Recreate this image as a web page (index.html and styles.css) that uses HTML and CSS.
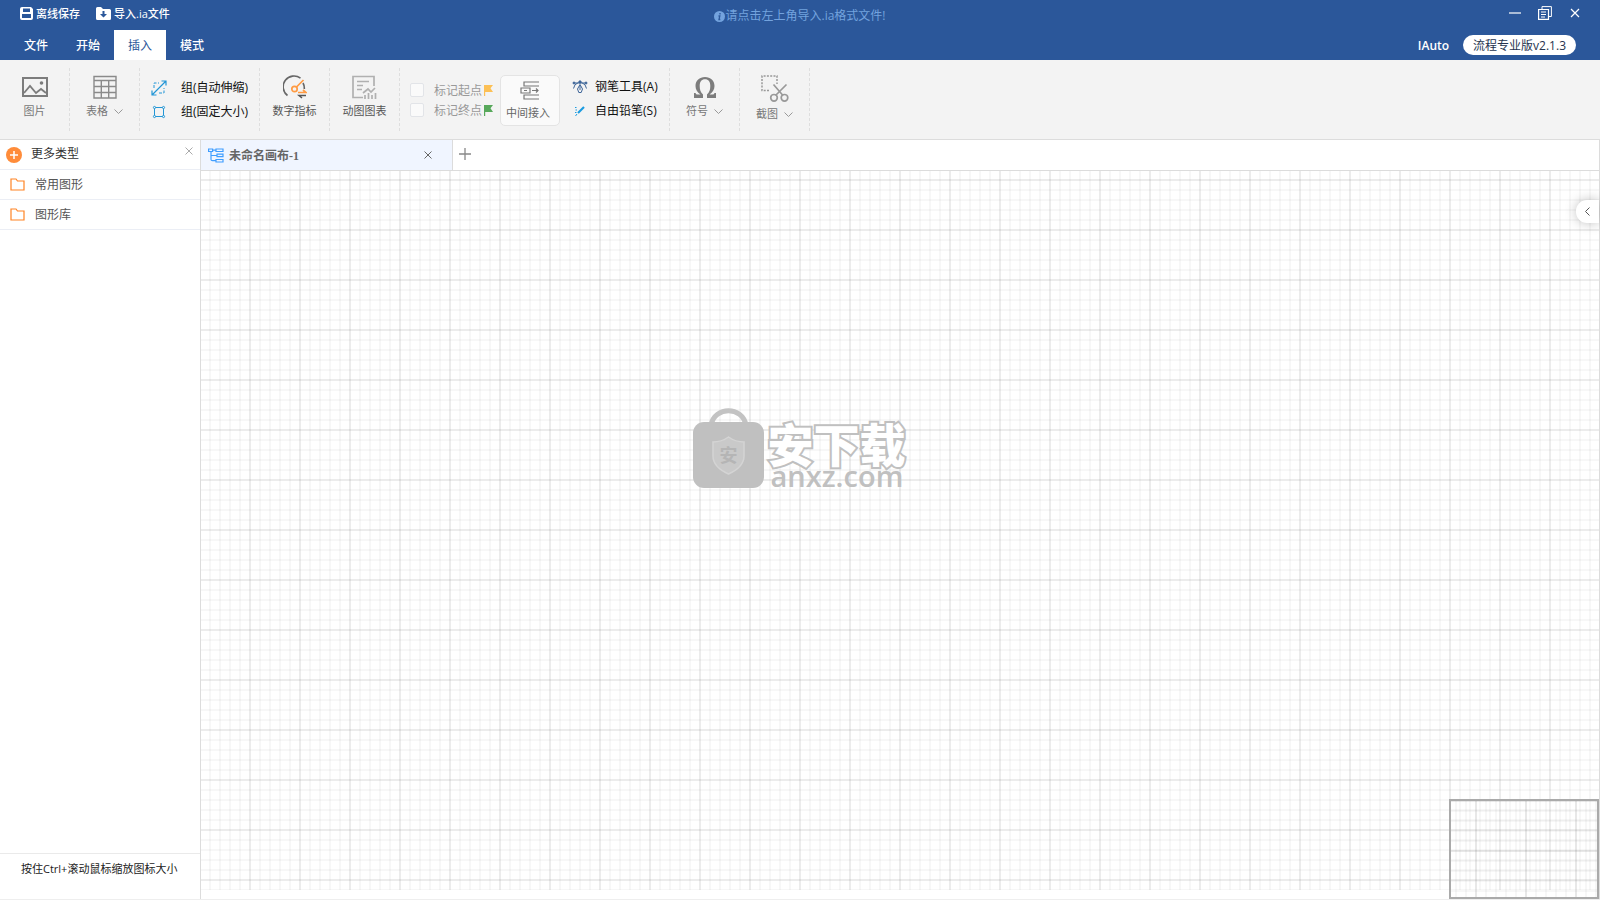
FILE: index.html
```html
<!DOCTYPE html>
<html lang="zh-CN">
<head>
<meta charset="utf-8">
<title>IAuto</title>
<link rel="stylesheet" href="styles.css">
</head>
<body>
<header class="header">
  <div class="titlebar">
    <div class="quick">
      <button class="quick-btn" type="button">
        <svg width="13" height="13" viewBox="0 0 13 13"><path fill="#fff" fill-rule="evenodd" d="M2 0h9l2 2v9a2 2 0 0 1-2 2H2a2 2 0 0 1-2-2V2a2 2 0 0 1 2-2zM3 1.500v3.500h7V1.500zM2 7v4h9V7z"/></svg>
        离线保存
      </button>
      <button class="quick-btn" type="button">
        <svg width="15" height="13" viewBox="0 0 15 13"><path fill="#fff" d="M0 1.500Q0 0 1.500 0H5l2 2h6.500Q15 2 15 3.500v8q0 1.500-1.500 1.500h-12Q0 13 0 11.500z"/><path fill="#2b579a" d="M6.500 4h2v3h2.500L7.500 10.500 4 7h2.500z"/></svg>
        导入.ia文件
      </button>
    </div>
    <div class="hint">
      <svg width="11" height="11" viewBox="0 0 11 11"><circle cx="5.500" cy="5.500" r="5.500" fill="#73a3de"/><path d="M6 2v1.500M4.500 5h1.300L5 8.500h1.300" fill="none" stroke="#2b579a" stroke-width="1.300"/></svg>请点击左上角导入.ia格式文件!
    </div>
    <div class="window-btns">
      <button type="button" aria-label="最小化"><svg width="14" height="14" viewBox="0 0 14 14"><path d="M1 7h12" stroke="#fff" stroke-width="1.200"/></svg></button>
      <button type="button" aria-label="还原"><svg width="14" height="14" viewBox="0 0 14 14" fill="none" stroke="#fff"><path d="M4 3.500V.6h9.400v9.900H10.500"/><path d="M.6 3.500h9.900v9.900H.6zM3 6h5M3 8.500h5M3 11h4" stroke-width="1.200"/></svg></button>
      <button type="button" aria-label="关闭"><svg width="14" height="14" viewBox="0 0 14 14"><path d="M3 3l8 8M11 3l-8 8" stroke="#fff" stroke-width="1.200"/></svg></button>
    </div>
  </div>
  <div class="menubar">
    <nav class="menu">
      <button type="button">文件</button>
      <button type="button">开始</button>
      <button type="button" class="active">插入</button>
      <button type="button">模式</button>
    </nav>
    <div class="account">
      <span class="user">IAuto</span>
      <button class="version" type="button">流程专业版v2.1.3</button>
    </div>
  </div>
</header>

<div class="ribbon">
  <div class="group">
    <button class="tool" type="button">
      <svg width="26" height="24" viewBox="0 0 26 24" fill="none" stroke="#7c7c7c"><path d="M1 3h24v18H1z" stroke-width="2"/><path d="M2 18l6-7 6 7 5-4 5 4" stroke-width="1.800"/><circle cx="19.500" cy="8" r="1.800" fill="#7c7c7c" stroke="none"/></svg>
      <span>图片</span>
    </button>
  </div>
  <div class="group">
    <button class="tool" type="button">
      <svg width="24" height="24" viewBox="0 0 24 24" fill="none" stroke="#8a8a8a" stroke-width="1.400"><path d="M1 1.500h22v21.500H1zM1 5.500h22M1 11.500h22M1 17.500h22M8.300 5.500V23M15.700 5.500V23"/></svg>
      <span>表格 <svg class="caret" width="9" height="5" viewBox="0 0 9 5"><path d="M.5 .5l4 4 4-4" fill="none" stroke="#999"/></svg></span>
    </button>
  </div>
  <div class="group wide">
    <button class="row-tool" type="button">
      <svg width="16" height="16" viewBox="0 0 16 16" fill="none" stroke="#2296d6"><path d="M1 15L15 1M10.500 1H15v4.500M1 10.500V15h4.500" stroke-width="1.200"/><path d="M3 8V3h5M8 13h5V8" stroke-dasharray="3 1.500"/></svg>
      组(自动伸缩)
    </button>
    <button class="row-tool" type="button">
      <svg width="16" height="16" viewBox="0 0 16 16" fill="none" stroke="#2296d6"><path d="M4.500 3.500h7M4.500 12.500h7M3.500 4.500v7M12.500 4.500v7"/><g><circle cx="3.500" cy="3.500" r="1.100"/><circle cx="12.500" cy="3.500" r="1.100"/><circle cx="3.500" cy="12.500" r="1.100"/><circle cx="12.500" cy="12.500" r="1.100"/></g></svg>
      组(固定大小)
    </button>
  </div>
  <div class="group">
    <button class="tool dark" type="button">
      <svg width="24" height="24" viewBox="0 0 24 24" fill="none"><path d="M4.500 20.500A10.500 10.500 0 0 1 17.500 3.200M20 8a10.500 10.500 0 0 1 1.300 6" stroke="#666" stroke-width="1.600"/><g stroke="#ff9b43" stroke-width="1.700"><circle cx="11.500" cy="14" r="2.700"/><path d="M13.500 12L20.500 5M15 17.500h8l-3-2.500"/></g><path d="M23 20.500h-7l3 2.500" stroke="#555" stroke-width="1.500"/></svg>
      <span>数字指标</span>
    </button>
  </div>
  <div class="group">
    <button class="tool dark" type="button">
      <svg width="25" height="24" viewBox="0 0 25 24" fill="none" stroke="#b0b0b0" stroke-width="1.700"><path d="M22 11V1.500H1V22.500h10"/><path d="M5 6.500h12M5 10.500h6M5 14.500h5"/><path d="M11 18l5-4 3 3 4-4"/><path d="M13 24v-4M16.500 24v-6M20 24v-4M23.500 24v-6"/></svg>
      <span>动图图表</span>
    </button>
  </div>
  <div class="group flow">
    <div class="marks">
      <label><input type="checkbox" disabled><span>标记起点</span><svg width="9" height="11" viewBox="0 0 9 11"><path d="M0 0h9L6.500 3.200 9 7H1.200v4H0z" fill="#fcc055"/></svg></label>
      <label><input type="checkbox" disabled><span>标记终点</span><svg width="9" height="11" viewBox="0 0 9 11"><path d="M0 0h9L6.500 3.200 9 7H1.200v4H0z" fill="#57a85b"/></svg></label>
    </div>
    <button class="insert" type="button">
      <svg width="20" height="19" viewBox="0 0 20 19" fill="none" stroke="#777" stroke-width="1.200"><path d="M19 1H4v4h15M19 18H4v-4h15M1 7h9v5H1zM4 9.500h3M12 9.500h6M16 7.500l2 2-2 2"/></svg>
      <span>中间接入</span>
    </button>
    <div class="pens">
      <button class="row-tool" type="button">
        <svg width="16" height="16" viewBox="0 0 16 16" fill="none" stroke="#3d6498"><path d="M3 4h10M1.500 9.500Q2 5 6.500 3.500M14.500 9.500Q14 5 9.500 3.500M8 7v4M8 5.500L5.500 10l1.300 3.500h2.400L10.500 10z"/><g fill="#3d6498"><path d="M7 2h2v2H7z"/><circle cx="2" cy="4" r="1"/><circle cx="14" cy="4" r="1"/></g></svg>
        钢笔工具(A)
      </button>
      <button class="row-tool" type="button">
        <svg width="16" height="16" viewBox="0 0 16 16" fill="none" stroke="#1b9be0"><path d="M6 10l6-6" stroke-width="2.200"/><path d="M3.500 13l1.500-2M3 4.500h1.500M3.500 7H5M3 9.500h1.500"/></svg>
        自由铅笔(S)
      </button>
    </div>
  </div>
  <div class="group">
    <button class="tool" type="button">
      <svg width="24" height="24" viewBox="0 0 24 24"><path fill="#7c7c7c" d="M1 23v-5h1.500q.3 1.500 2 1.500h3C4.300 17.500 2.500 14.500 2.500 11 2.500 5.500 6.500 2 12 2s9.500 3.500 9.500 9c0 3.500-1.800 6.500-5 8.500h3q1.700 0 2-1.500H23v5h-9v-3.500c2.500-2 3.300-5 3.300-8.500 0-4.500-1.800-6.800-5.300-6.800S6.700 6.500 6.700 11c0 3.500.8 6.500 3.300 8.500V23z"/></svg>
      <span>符号 <svg class="caret" width="9" height="5" viewBox="0 0 9 5"><path d="M.5 .5l4 4 4-4" fill="none" stroke="#999"/></svg></span>
    </button>
  </div>
  <div class="group">
    <button class="tool" type="button">
      <svg width="28" height="27" viewBox="0 0 28 27" fill="none" stroke="#999"><path d="M8 15.500H1V1h15v8" stroke-width="1.500" stroke-dasharray="2 1.300"/><g stroke-width="1.700"><path d="M12.500 9.500l9.500 11M25.500 9.500L14.500 20.500"/><circle cx="13" cy="22.800" r="3.300"/><circle cx="23.500" cy="22.800" r="3.300"/></g></svg>
      <span>截图 <svg class="caret" width="9" height="5" viewBox="0 0 9 5"><path d="M.5 .5l4 4 4-4" fill="none" stroke="#999"/></svg></span>
    </button>
  </div>
</div>

<div class="workspace">
  <aside class="sidebar">
    <div class="side-head">
      <svg width="16" height="16" viewBox="0 0 16 16"><circle cx="8" cy="8" r="8" fill="#ff8c3a"/><path d="M8 4v8M4 8h8" stroke="#fff" stroke-width="1.500"/></svg>
      <span>更多类型</span>
      <button type="button" class="side-close" aria-label="关闭"><svg width="8" height="8" viewBox="0 0 8 8"><path d="M.5 .5l7 7M7.500 .5l-7 7" stroke="#aaa"/></svg></button>
    </div>
    <button class="side-item" type="button"><svg width="15" height="13" viewBox="0 0 15 13"><path d="M1 12V1h5l1.500 2H14v9z" fill="none" stroke="#ff8424" stroke-width="1.200"/></svg>常用图形</button>
    <button class="side-item" type="button"><svg width="15" height="13" viewBox="0 0 15 13"><path d="M1 12V1h5l1.500 2H14v9z" fill="none" stroke="#ff8424" stroke-width="1.200"/></svg>图形库</button>
    <div class="side-foot">按住Ctrl+滚动鼠标缩放图标大小</div>
  </aside>
  <main class="main">
    <div class="tabs">
      <div class="tab">
        <svg width="16" height="15" viewBox="0 0 16 15" fill="none" stroke="#409eff" stroke-width="1.200"><path d="M.6 1h4v2.500h-4zM8 1h7v2.500H8zM9 6.200h6v2.500H9zM8 11.500h7V14H8zM4.600 2.200H8M3 3.500v8q0 1.200 1.500 1.200H8M3 7.500h6"/></svg>
        <span>未命名画布-1</span>
        <button type="button" aria-label="关闭标签"><svg width="8" height="8" viewBox="0 0 8 8"><path d="M.5 .5l7 7M7.500 .5l-7 7" stroke="#666"/></svg></button>
      </div>
      <button class="add" type="button" aria-label="新建"><svg width="12" height="12" viewBox="0 0 12 12"><path d="M6 0v12M0 6h12" stroke="#888" stroke-width="1.300"/></svg></button>
    </div>
    <div class="canvas">
      <div class="grid"></div>
      <div class="watermark">
        <svg width="71" height="81" viewBox="0 0 71 81"><path d="M18 17C22-2 49-2 53 17" fill="none" stroke="#c3c3c3" stroke-width="5"/><rect y="14" width="71" height="66" rx="11" fill="#c0c0c0"/><path d="M35.500 29q7 5 15.500 5v14q0 11-15.500 18Q20 59 20 48V34q8.500 0 15.500-5z" fill="#c9c9c9" stroke="#d4d4d4" stroke-width="1.500"/><text x="35.500" y="54" text-anchor="middle" class="shield-text">安</text></svg>
        <div class="brand"><span class="brand-cn">安下载</span><span class="brand-url">anxz.com</span></div>
      </div>
      <button class="drawer" type="button" aria-label="展开"><svg width="5" height="9" viewBox="0 0 5 9"><path d="M4.500 .5l-4 4 4 4" fill="none" stroke="#555"/></svg></button>
      <div class="minimap"></div>
    </div>
  </main>
</div>
</body>
</html>
```

FILE: styles.css
```css
* { box-sizing: border-box; }
body {
  margin: 0;
  height: 100vh;
  display: flex;
  flex-direction: column;
  overflow: hidden;
  background: #fff;
  color: #333;
  font: 12px/18px "Open Sans", "Noto Sans CJK SC", sans-serif;
}
button {
  margin: 0;
  padding: 0;
  border: 0;
  background: none;
  color: inherit;
  font: inherit;
  white-space: nowrap;
}
svg { display: block; flex: none; }

.header { background: #2b579a; color: #fff; }
.titlebar {
  display: grid;
  grid-template-columns: 1fr auto 1fr;
  height: 30px;
}
.quick { display: flex; gap: 16px; padding: 0 0 3px 20px; }
.quick-btn {
  display: flex;
  align-items: center;
  gap: 3px;
  font-size: 11px;
  font-weight: 500;
}
.hint { display: flex; align-items: center; padding-top: 2px; color: #73a3de; }
.window-btns {
  display: flex;
  justify-content: flex-end;
  gap: 16px;
  padding: 0 18px 4px 0;
}
.menubar { display: flex; justify-content: space-between; height: 30px; }
.menu { display: flex; padding-left: 10px; }
.menu button { padding: 2px 14px 0; font-weight: 500; }
.menu .active { background: #fff; color: #2b579a; font-weight: 400; }
.account { display: flex; align-items: center; gap: 14px; padding-right: 24px; }
.user { padding-top: 2px; font-weight: 600; }
.version {
  height: 20px;
  padding: 1px 10px 0;
  border-radius: 10px;
  background: #fff;
  color: #26344f;
}

.ribbon {
  display: flex;
  height: 80px;
  padding: 8px 0;
  background: #f3f3f3;
  border-bottom: 1px solid #dcdcdc;
}
.group {
  width: 70px;
  display: flex;
  justify-content: center;
  align-items: flex-start;
  padding-top: 7px;
  border-right: 1px dashed #dedede;
}
.tool {
  display: flex;
  flex-direction: column;
  align-items: center;
  gap: 3px;
  color: #777;
  font-size: 11px;
}
.tool span { display: flex; align-items: center; gap: 6px; }
.dark { color: #555; }
.wide {
  width: 120px;
  flex-direction: column;
  justify-content: flex-start;
  padding: 8px 0 0 11px;
}
.row-tool {
  display: flex;
  align-items: center;
  gap: 14px;
  height: 24px;
  color: #111;
}
.flow { width: 270px; justify-content: flex-start; padding-left: 10px; }
.marks { display: flex; flex-direction: column; gap: 2px; padding-top: 6px; }
.marks label { display: flex; align-items: center; height: 18px; color: #999; }
.marks span { padding-top: 2px; }
.marks input {
  appearance: none;
  width: 14px;
  height: 14px;
  margin: 0 10px 0 0;
  border: 1px solid #e2e4e8;
  border-radius: 2px;
  background: #fafafa;
}
.marks svg { margin-left: 2px; }
.insert {
  display: flex;
  flex-direction: column;
  align-items: center;
  gap: 4px;
  width: 60px;
  height: 51px;
  margin-left: 7px;
  padding: 5px 4px 0 0;
  border: 1px solid #e4e4e4;
  border-radius: 5px;
  background: #fafafa;
  color: #666;
  font-size: 11px;
}
.insert svg { margin-left: 4px; }
.pens { padding-left: 12px; }
.pens .row-tool { gap: 7px; }

.workspace { flex: 1; min-height: 0; display: flex; border-bottom: 1px solid #eee; }
.sidebar {
  width: 201px;
  display: flex;
  flex-direction: column;
  border-right: 1px solid #dcdcdc;
}
.side-head {
  display: flex;
  align-items: center;
  gap: 9px;
  height: 30px;
  padding: 0 7px 0 6px;
  border-bottom: 1px solid #ebeef5;
}
.side-head span { padding-bottom: 2px; }
.side-close { margin: 0 0 8px auto; }
.side-item {
  display: flex;
  align-items: center;
  gap: 10px;
  height: 30px;
  padding-left: 10px;
  border-bottom: 1px solid #ebeef5;
  color: #555;
}
.side-foot {
  height: 46px;
  margin-top: auto;
  padding: 6px 0 0 21px;
  border-top: 1px solid #eaeaea;
  color: #222;
  font-size: 11px;
}

.main { flex: 1; min-width: 0; display: flex; flex-direction: column; border-right: 1px solid #dcdcdc; }
.tabs { display: flex; height: 31px; border-bottom: 1px solid #dcdcdc; }
.tab {
  display: flex;
  align-items: center;
  gap: 5px;
  width: 252px;
  padding: 0 20px 0 7px;
  border-right: 1px solid #dcdcdc;
  background: #f0f5ff;
  color: #666;
  font-family: "Liberation Serif", "Noto Sans CJK SC", serif;
  font-weight: 700;
}
.tab span { padding-top: 2px; }
.tab button { margin-left: auto; }
.add { padding: 0 6px 3px; }

.canvas { flex: 1; position: relative; display: flex; justify-content: center; align-items: flex-start; }
.grid {
  position: absolute;
  inset: 0 0 9px 0;
  background-image:
    linear-gradient(90deg, rgba(0,0,0,.045) 2px, transparent 2px),
    linear-gradient(rgba(0,0,0,.045) 2px, transparent 2px),
    linear-gradient(90deg, rgba(0,0,0,.03) 2px, transparent 2px),
    linear-gradient(rgba(0,0,0,.03) 2px, transparent 2px);
  background-size: 50px 50px, 50px 50px, 10px 10px, 10px 10px;
  background-position: 48px 8px, 48px 8px, 8px 8px, 8px 8px;
}
.watermark {
  position: relative;
  display: flex;
  gap: 4px;
  margin-top: 237px;
  padding-right: 202px;
}
.brand { display: flex; flex-direction: column; color: #c0c0c0; }
.brand-cn {
  color: #fff;
  font: 900 46px/50px "Noto Sans CJK SC", sans-serif;
  -webkit-text-stroke: 4px #c0c0c0;
  paint-order: stroke fill;
  padding-top: 9px;
}
.brand-url { font-size: 29px; line-height: 18px; font-weight: 600; padding-left: 3px; }
.shield-text { font: 700 18px "Noto Sans CJK SC", sans-serif; fill: #b5b5b5; }
.drawer {
  position: absolute;
  top: 29px;
  right: 0;
  width: 23px;
  height: 23px;
  padding-left: 9px;
  border-radius: 11px 0 0 11px;
  background: #fff;
  box-shadow: 0 0 12px rgba(0,0,0,.25);
}
.minimap {
  position: absolute;
  right: 0;
  bottom: 0;
  width: 150px;
  height: 100px;
  border: 2px solid #aaa;
  background-image:
    linear-gradient(90deg, rgba(0,0,0,.06) 2px, transparent 2px),
    linear-gradient(rgba(0,0,0,.06) 2px, transparent 2px),
    linear-gradient(90deg, rgba(0,0,0,.03) 2px, transparent 2px),
    linear-gradient(rgba(0,0,0,.03) 2px, transparent 2px);
  background-size: 50px 50px, 50px 50px, 10px 10px, 10px 10px;
  background-position: 24px 49px, 24px 49px, 4px 9px, 4px 9px;
}
```
